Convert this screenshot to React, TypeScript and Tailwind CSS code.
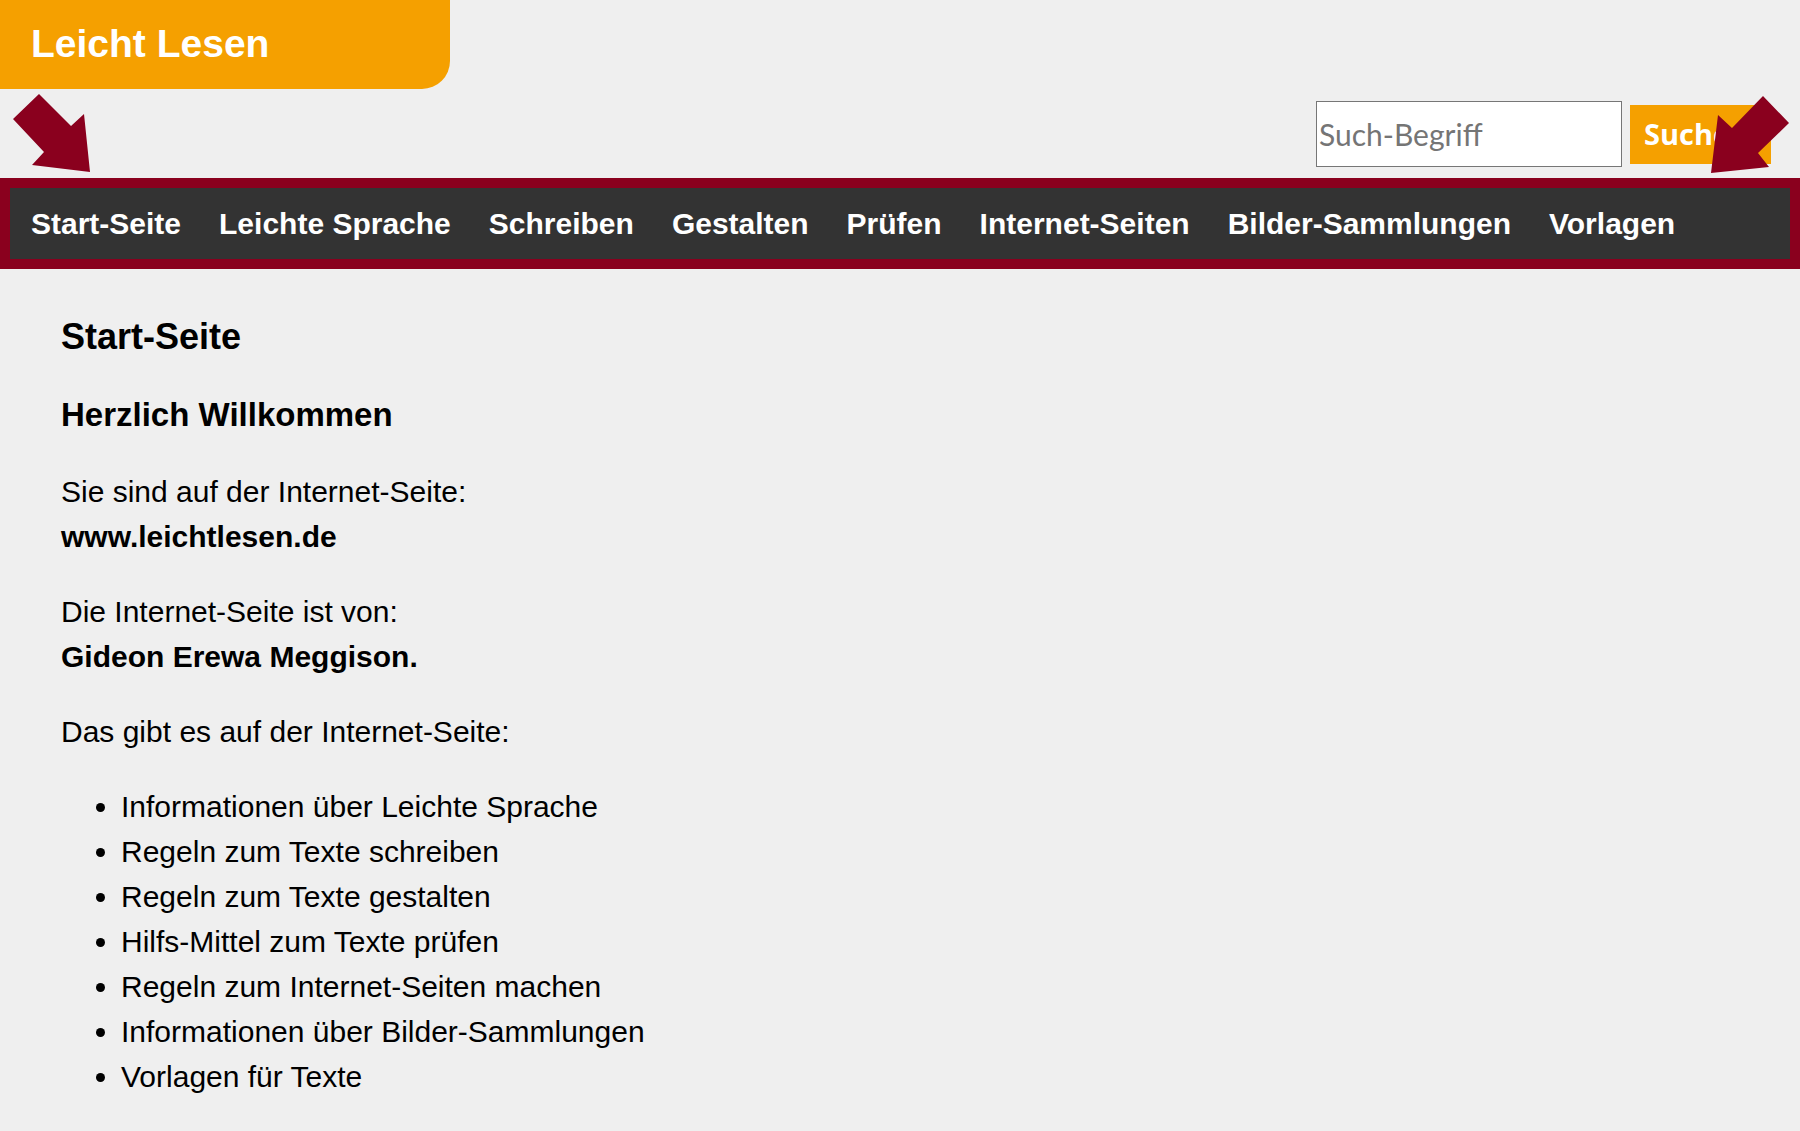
const navItems = [
  'Start-Seite',
  'Leichte Sprache',
  'Schreiben',
  'Gestalten',
  'Prüfen',
  'Internet-Seiten',
  'Bilder-Sammlungen',
  'Vorlagen',
]

const topics = [
  'Informationen über Leichte Sprache',
  'Regeln zum Texte schreiben',
  'Regeln zum Texte gestalten',
  'Hilfs-Mittel zum Texte prüfen',
  'Regeln zum Internet-Seiten machen',
  'Informationen über Bilder-Sammlungen',
  'Vorlagen für Texte',
]

// Hint arrows pointing at the menu bar
const ArrowLeft = () => (
  <svg className="absolute left-[10px] top-[90px] w-[85px] h-[86px] pointer-events-none" viewBox="0 0 85 86">
    <polygon points="29,4 61,36 74,24 80,82 22,75 34,62 3,29" fill="#8a001e" />
  </svg>
)

const ArrowRight = () => (
  <svg className="absolute right-[10px] top-[90px] w-[80px] h-[86px] pointer-events-none" viewBox="0 0 80 86">
    <polygon points="53,6 22,38 8,25 1,83 59,77 48,63 79,33" fill="#8a001e" />
  </svg>
)

export default function App() {
  return (
    <div className="relative min-h-screen w-full bg-[#efefef] text-black font-['Liberation_Sans',Arial,sans-serif]">
      {/* Header */}
      <header className="flex items-start justify-between">
        <div className="w-[450px] h-[89px] bg-[#f5a000] rounded-br-[28px] pl-[31px] pt-[24px]">
          <span className="block text-[39px] leading-[39px] font-bold text-white">Leicht Lesen</span>
        </div>

        <form className="mt-[101px] mr-[29px] flex items-center gap-[8px]" onSubmit={(e) => e.preventDefault()}>
          <input
            type="text"
            placeholder="Such-Begriff"
            className="w-[306px] h-[66px] bg-white border border-[#767676] pl-[2px] text-[30px] font-['Lato','Open_Sans',sans-serif] placeholder:text-[#757575] outline-none"
          />
          <button
            type="submit"
            className="w-[141px] h-[59px] bg-[#f5a000] text-white text-left pl-[14px] text-[29px] font-bold font-['Open_Sans','Lato',sans-serif]"
          >
            Suchen
          </button>
        </form>
      </header>

      {/* Menu */}
      <nav className="mt-[11px] border-[10px] border-[#8a001e] bg-[#333333]">
        <ul className="flex h-[71px] items-center gap-[38px] pl-[21px] pt-[2px]">
          {navItems.map((item) => (
            <li key={item}>
              <a href="#" className="text-[30px] font-bold text-white leading-none">
                {item}
              </a>
            </li>
          ))}
        </ul>
      </nav>

      <ArrowLeft />
      <ArrowRight />

      {/* Content */}
      <main className="px-[61px] pt-[47px] pb-[30px]">
        <h1 className="text-[36px] leading-[42px] font-bold mb-[38px]">Start-Seite</h1>
        <h2 className="text-[33px] leading-[38px] font-bold mb-[35px]">Herzlich Willkommen</h2>

        <p className="text-[30px] leading-[45px] mb-[30px]">
          Sie sind auf der Internet-Seite:
          <br />
          <strong>www.leichtlesen.de</strong>
        </p>

        <p className="text-[30px] leading-[45px] mb-[30px]">
          Die Internet-Seite ist von:
          <br />
          <strong>Gideon Erewa Meggison.</strong>
        </p>

        <p className="text-[30px] leading-[45px] mb-[30px]">Das gibt es auf der Internet-Seite:</p>

        <ul className="list-disc pl-[60px] text-[30px] leading-[45px]">
          {topics.map((t) => (
            <li key={t}>{t}</li>
          ))}
        </ul>
      </main>
    </div>
  )
}
